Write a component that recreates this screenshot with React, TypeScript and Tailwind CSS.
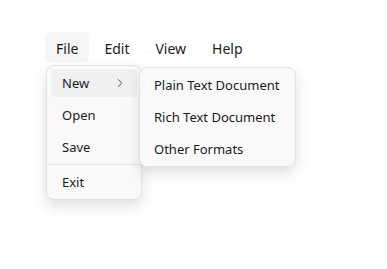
import { ChevronRight } from "lucide-react";

const bar = ["File", "Edit", "View", "Help"];
const fileItems = ["New", "Open", "Save"];
const newItems = ["Plain Text Document", "Rich Text Document", "Other Formats"];

const App = () => {
  return (
    <div className="relative h-[269px] w-[387px] bg-white text-[13px] text-[#1b1b1b] font-['Noto_Sans',sans-serif] whitespace-nowrap">
      <div className="flex gap-[4px] pl-[45px] pt-[32px] text-[14px]">
        {bar.map((b, i) => (
          <div
            key={b}
            className={`flex h-[30px] items-center rounded-[5px] px-[11px] pt-[3px] ${i === 0 ? "bg-[#f5f5f5]" : ""}`}
          >
            {b}
          </div>
        ))}
      </div>

      {/* File menu */}
      <div className="absolute left-[46px] top-[65px] flex w-[96px] flex-col rounded-[8px] border border-[#e3e3e3] bg-[#f9f9f9] py-px shadow-[0_6px_14px_rgba(0,0,0,0.13)]">
        {fileItems.map((item, i) => (
          <div
            key={item}
            className={`mx-1 my-0.5 flex h-7 items-center justify-between rounded-[4px] pl-[11px] pr-[10px] ${i === 0 ? "bg-[#f0f0f0]" : ""}`}
          >
            <span className="pt-[2px]">{item}</span>
            {i === 0 && <ChevronRight size={14} strokeWidth={1.4} className="text-[#333]" />}
          </div>
        ))}
        <div className="my-px h-px bg-[#e6e6e6]" />
        <div className="mx-1 my-0.5 flex h-7 items-center rounded-[4px] px-[11px] pt-[2px]">Exit</div>
      </div>

      {/* New submenu */}
      <div className="absolute left-[139px] top-[67px] flex w-[157px] flex-col rounded-[8px] border border-[#e3e3e3] bg-[#f9f9f9] py-px shadow-[0_6px_14px_rgba(0,0,0,0.13)]">
        {newItems.map((item) => (
          <div key={item} className="mx-1 my-0.5 flex h-7 items-center rounded-[4px] px-[10px] pt-[2px]">
            {item}
          </div>
        ))}
      </div>
    </div>
  );
};

export default App;
